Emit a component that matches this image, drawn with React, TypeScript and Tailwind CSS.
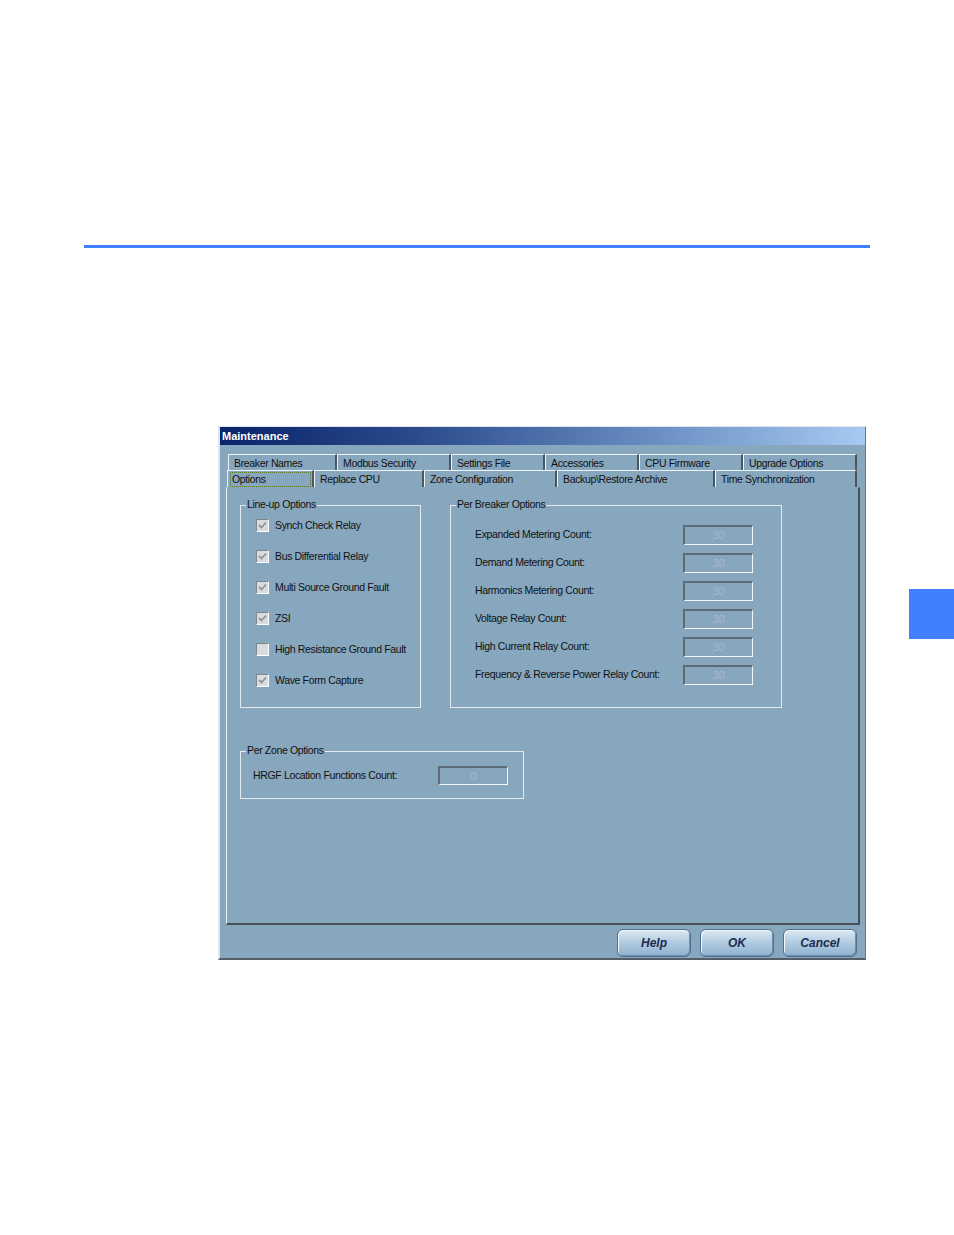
import React from "react";

const BODY = "bg-[#87a7be]";
const TXT = "text-[10.5px] tracking-[-0.35px] text-[#111]";

function Tab({ label, width, selected = false }: { label: string; width: number; selected?: boolean }) {
  return (
    <div
      className={`h-full border-t border-l border-t-[#eef2f5] border-l-[#eef2f5] border-r-2 border-r-[#4b5660] pl-[5px] ${TXT} leading-[15px] whitespace-nowrap`}
      style={{ width }}
    >
      {selected ? (
        <span className="block mt-[1px] mr-[1px] -ml-[3px] pl-[2px] h-[15px] outline outline-1 outline-dotted outline-[#5e7a1e] -outline-offset-1">
          {label}
        </span>
      ) : (
        <span className="block pt-[1px]">{label}</span>
      )}
    </div>
  );
}

function CheckBox({ checked }: { checked: boolean }) {
  return (
    <div className="w-[13px] h-[13px] border-t border-l border-[#7d8790] border-r border-b border-r-white border-b-white bg-[#d9dcde] flex items-center justify-center shrink-0">
      {checked && (
        <svg width="9" height="9" viewBox="0 0 9 9">
          <path d="M1 4 L3.5 6.5 L8 1.5" stroke="#8c949a" strokeWidth="1.8" fill="none" />
        </svg>
      )}
    </div>
  );
}

function CountBox({ value, w = 70, h = 20 }: { value: string; w?: number; h?: number }) {
  return (
    <div
      className="border-t-2 border-l-2 border-t-[#5d6b76] border-l-[#5d6b76] border-r border-b border-r-[#f4f6f8] border-b-[#f4f6f8] flex items-center justify-center text-[11px] text-[#a9b8c4]"
      style={{ width: w, height: h }}
    >
      {value}
    </div>
  );
}

function Group({ title, className, children }: { title: string; className: string; children: React.ReactNode }) {
  return (
    <div className={`relative border border-[#e4eaef] ${className}`}>
      <span className={`absolute -top-[9px] left-[5px] px-[1px] ${BODY} ${TXT} leading-[14px]`}>
        {title}
      </span>
      {children}
    </div>
  );
}

const lineup = [
  { label: "Synch Check Relay", checked: true },
  { label: "Bus Differential Relay", checked: true },
  { label: "Multi Source Ground Fault", checked: true },
  { label: "ZSI", checked: true },
  { label: "High Resistance Ground Fault", checked: false },
  { label: "Wave Form Capture", checked: true },
];

const counts = [
  "Expanded Metering Count:",
  "Demand Metering Count:",
  "Harmonics Metering Count:",
  "Voltage Relay Count:",
  "High Current Relay Count:",
  "Frequency & Reverse Power Relay Count:",
];

function DlgButton({ label, width }: { label: string; width: number }) {
  return (
    <button
      className="h-[28px] rounded-[6px] border border-[#4f6f8e] bg-[linear-gradient(180deg,#dbe9f3_0%,#b3cde2_45%,#8fb1cf_100%)] shadow-[inset_1px_1px_0_#f4f8fb,inset_-1px_-1px_0_#6d8fae] text-[12px] font-bold italic text-[#1d2b50] leading-[26px]"
      style={{ width }}
    >
      {label}
    </button>
  );
}

export default function App() {
  return (
    <div className="w-[954px] h-[1235px] bg-white flex flex-col font-['Liberation_Sans',Arial,sans-serif]">
      <div className="ml-[84px] mt-[245px] w-[786px] h-[3px] bg-[#4080ff]" />

      <div className="flex items-start mt-[178px]">
        {/* dialog */}
        <div className={`ml-[218px] w-[648px] h-[534px] ${BODY} border-t border-l-2 border-t-[#dfe6eb] border-l-[#dfe6eb] border-r border-b-2 border-r-[#6b7780] border-b-[#555e66] flex flex-col`}>
          <div className="h-[18px] bg-[linear-gradient(90deg,#0a246a_0%,#2a4a8c_30%,#6f93c6_70%,#a6caf0_100%)] pl-[2px] text-[11px] font-bold text-white leading-[18px]">
            Maintenance
          </div>

          {/* tab rows */}
          <div className="mt-[9px] ml-[8px] flex h-[16px]">
            <Tab label="Breaker Names" width={109} />
            <Tab label="Modbus Security" width={114} />
            <Tab label="Settings File" width={94} />
            <Tab label="Accessories" width={94} />
            <Tab label="CPU Firmware" width={104} />
            <Tab label="Upgrade Options" width={114} />
          </div>
          <div className="ml-[7px] flex h-[17px]">
            <Tab label="Options" width={87} selected />
            <Tab label="Replace CPU" width={110} />
            <Tab label="Zone Configuration" width={133} />
            <Tab label="Backup\Restore Archive" width={158} />
            <Tab label="Time Synchronization" width={142} />
          </div>

          {/* tab page */}
          <div className="ml-[6px] w-[634px] h-[438px] border-l border-t border-l-[#eef2f5] border-t-[#87a7be] border-r-2 border-b-2 border-r-[#4a4f55] border-b-[#4a4f55] pl-[13px] pt-[17px] flex flex-col">
            <div className="flex gap-[29px]">
              <Group title="Line-up Options" className="w-[181px] h-[203px]">
                <div className="flex flex-col pt-[4px] pl-[15px]">
                  {lineup.map((o) => (
                    <div key={o.label} className={`h-[31px] flex items-center gap-[6px] ${TXT} whitespace-nowrap`}>
                      <CheckBox checked={o.checked} />
                      <span>{o.label}</span>
                    </div>
                  ))}
                </div>
              </Group>

              <Group title="Per Breaker Options" className="w-[332px] h-[203px]">
                <div className="flex flex-col pt-[15px] pl-[24px]">
                  {counts.map((c) => (
                    <div key={c} className={`h-[28px] grid grid-cols-[208px_70px] items-center ${TXT}`}>
                      <span className="whitespace-nowrap">{c}</span>
                      <CountBox value="30" />
                    </div>
                  ))}
                </div>
              </Group>
            </div>

            <Group title="Per Zone Options" className="mt-[43px] w-[284px] h-[48px]">
              <div className={`pt-[14px] pl-[12px] grid grid-cols-[185px_70px] items-center ${TXT}`}>
                <span className="whitespace-nowrap">HRGF Location Functions Count:</span>
                <CountBox value="0" h={19} />
              </div>
            </Group>
          </div>

          {/* buttons */}
          <div className="mt-[4px] mr-[8px] flex justify-end gap-[9px]">
            <DlgButton label="Help" width={74} />
            <DlgButton label="OK" width={74} />
            <DlgButton label="Cancel" width={74} />
          </div>
        </div>

        {/* side tab */}
        <div className="ml-auto mt-[163px] w-[45px] h-[50px] bg-[#4080ff]" />
      </div>
    </div>
  );
}
